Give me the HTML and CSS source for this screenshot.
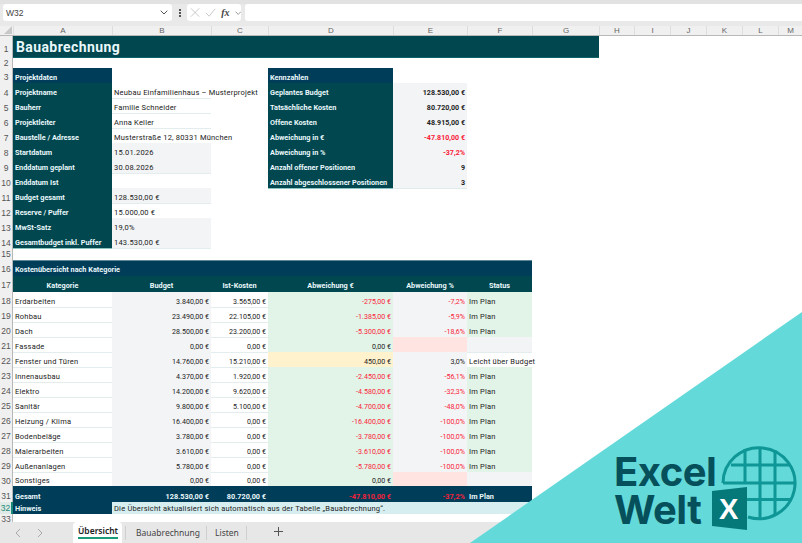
FILE: index.html
```html
<!DOCTYPE html>
<html lang="de">
<head>
<meta charset="utf-8">
<title>Bauabrechnung</title>
<link rel="stylesheet" href="styles.css">
</head>
<body>
<div class="app">
  <div class="strip"></div>
  <div class="fbar">
    <div class="namebox"><span>W32</span>
      <svg class="chev" width="8" height="5" viewBox="0 0 8 5"><path d="M.7.7 4 4l3.3-3.3" fill="none" stroke="#555" stroke-width="1"/></svg>
    </div>
    <div class="dots"><i></i><i></i><i></i></div>
    <div class="fxbox">
      <svg width="11" height="11" viewBox="0 0 11 11"><path d="M1 1l9 9M10 1l-9 9" stroke="#c4c4c4" stroke-width="1"/></svg>
      <svg width="12" height="11" viewBox="0 0 12 11"><path d="M1 6l3.500 3.500L11 1.500" fill="none" stroke="#c4c4c4" stroke-width="1"/></svg>
      <span class="fx">fx</span>
      <svg width="7" height="4" viewBox="0 0 7 4"><path d="M.5.5 3.500 3.500 6.500.5" fill="none" stroke="#777" stroke-width=".8"/></svg>
    </div>
    <div class="formula"></div>
  </div>
  <div class="sheet">
    <div class="row colhead">
      <div class="corner"><svg width="8" height="8" viewBox="0 0 8 8"><path d="M8 0v8H0z" fill="#c8c8c8"/></svg></div>
      <div>A</div><div>B</div><div>C</div><div>D</div><div>E</div><div>F</div><div>G</div><div>H</div><div>I</div><div>J</div><div>K</div><div>L</div><div>M</div>
    </div>

    <div class="row r1"><div class="hd">1</div><div class="title">Bauabrechnung</div></div>
    <div class="row r2"><div class="hd">2</div></div>
    <div class="row"><div class="hd">3</div><div class="sec">Projektdaten</div><div></div><div></div><div class="sec">Kennzahlen</div></div>

    <div class="row kp"><div class="hd">4</div><div class="lb">Projektname</div><div class="tx ln">Neubau Einfamilienhaus – Musterprojekt</div><div></div><div class="lb">Geplantes Budget</div><div class="kv">128.530,00 €</div></div>
    <div class="row kp"><div class="hd">5</div><div class="lb">Bauherr</div><div class="tx ln">Familie Schneider</div><div></div><div class="lb">Tatsächliche Kosten</div><div class="kv">80.720,00 €</div></div>
    <div class="row kp"><div class="hd">6</div><div class="lb">Projektleiter</div><div class="tx ln">Anna Keller</div><div></div><div class="lb">Offene Kosten</div><div class="kv">48.915,00 €</div></div>
    <div class="row kp"><div class="hd">7</div><div class="lb">Baustelle / Adresse</div><div class="tx ln">Musterstraße 12, 80331 München</div><div></div><div class="lb">Abweichung in €</div><div class="kv neg">-47.810,00 €</div></div>
    <div class="row kp"><div class="hd">8</div><div class="lb">Startdatum</div><div class="tx gray">15.01.2026</div><div></div><div class="lb">Abweichung in %</div><div class="kv neg">-37,2%</div></div>
    <div class="row kp"><div class="hd">9</div><div class="lb">Enddatum geplant</div><div class="tx gray">30.08.2026</div><div></div><div class="lb">Anzahl offener Positionen</div><div class="kv">9</div></div>
    <div class="row kp"><div class="hd">10</div><div class="lb">Enddatum Ist</div><div class="tx ln"></div><div></div><div class="lb">Anzahl abgeschlossener Positionen</div><div class="kv">3</div></div>
    <div class="row kp"><div class="hd">11</div><div class="lb">Budget gesamt</div><div class="tx gray">128.530,00 €</div></div>
    <div class="row kp"><div class="hd">12</div><div class="lb">Reserve / Puffer</div><div class="tx ln">15.000,00 €</div></div>
    <div class="row kp"><div class="hd">13</div><div class="lb">MwSt-Satz</div><div class="tx gray">19,0%</div></div>
    <div class="row kp"><div class="hd">14</div><div class="lb">Gesamtbudget inkl. Puffer</div><div class="tx gray">143.530,00 €</div></div>
    <div class="row r15"><div class="hd">15</div></div>

    <div class="row r16"><div class="hd">16</div><div class="sec wide">Kostenübersicht nach Kategorie</div></div>
    <div class="row r17"><div class="hd">17</div><div class="th">Kategorie</div><div class="th">Budget</div><div class="th">Ist-Kosten</div><div class="th">Abweichung €</div><div class="th">Abweichung %</div><div class="th">Status</div></div>

    <div class="row"><div class="hd">18</div><div class="tx ln">Erdarbeiten</div><div class="num gray">3.840,00 €</div><div class="num ln">3.565,00 €</div><div class="num green red">-275,00 €</div><div class="num gray red">-7,2%</div><div class="tx green">Im Plan</div></div>
    <div class="row"><div class="hd">19</div><div class="tx ln">Rohbau</div><div class="num gray">23.490,00 €</div><div class="num ln">22.105,00 €</div><div class="num green red">-1.385,00 €</div><div class="num gray red">-5,9%</div><div class="tx green">Im Plan</div></div>
    <div class="row"><div class="hd">20</div><div class="tx ln">Dach</div><div class="num gray">28.500,00 €</div><div class="num ln">23.200,00 €</div><div class="num green red">-5.300,00 €</div><div class="num gray red">-18,6%</div><div class="tx green">Im Plan</div></div>
    <div class="row"><div class="hd">21</div><div class="tx ln">Fassade</div><div class="num gray">0,00 €</div><div class="num ln">0,00 €</div><div class="num green">0,00 €</div><div class="num pink"></div><div class="tx gray"></div></div>
    <div class="row"><div class="hd">22</div><div class="tx ln">Fenster und Türen</div><div class="num gray">14.760,00 €</div><div class="num ln">15.210,00 €</div><div class="num yellow">450,00 €</div><div class="num gray">3,0%</div><div class="tx ln">Leicht über Budget</div></div>
    <div class="row"><div class="hd">23</div><div class="tx ln">Innenausbau</div><div class="num gray">4.370,00 €</div><div class="num ln">1.920,00 €</div><div class="num green red">-2.450,00 €</div><div class="num gray red">-56,1%</div><div class="tx green">Im Plan</div></div>
    <div class="row"><div class="hd">24</div><div class="tx ln">Elektro</div><div class="num gray">14.200,00 €</div><div class="num ln">9.620,00 €</div><div class="num green red">-4.580,00 €</div><div class="num gray red">-32,3%</div><div class="tx green">Im Plan</div></div>
    <div class="row"><div class="hd">25</div><div class="tx ln">Sanitär</div><div class="num gray">9.800,00 €</div><div class="num ln">5.100,00 €</div><div class="num green red">-4.700,00 €</div><div class="num gray red">-48,0%</div><div class="tx green">Im Plan</div></div>
    <div class="row"><div class="hd">26</div><div class="tx ln">Heizung / Klima</div><div class="num gray">16.400,00 €</div><div class="num ln">0,00 €</div><div class="num green red">-16.400,00 €</div><div class="num gray red">-100,0%</div><div class="tx green">Im Plan</div></div>
    <div class="row"><div class="hd">27</div><div class="tx ln">Bodenbeläge</div><div class="num gray">3.780,00 €</div><div class="num ln">0,00 €</div><div class="num green red">-3.780,00 €</div><div class="num gray red">-100,0%</div><div class="tx green">Im Plan</div></div>
    <div class="row"><div class="hd">28</div><div class="tx ln">Malerarbeiten</div><div class="num gray">3.610,00 €</div><div class="num ln">0,00 €</div><div class="num green red">-3.610,00 €</div><div class="num gray red">-100,0%</div><div class="tx green">Im Plan</div></div>
    <div class="row"><div class="hd">29</div><div class="tx ln">Außenanlagen</div><div class="num gray">5.780,00 €</div><div class="num ln">0,00 €</div><div class="num green red">-5.780,00 €</div><div class="num gray red">-100,0%</div><div class="tx green">Im Plan</div></div>
    <div class="row r30"><div class="hd">30</div><div class="tx">Sonstiges</div><div class="num gray">0,00 €</div><div class="num">0,00 €</div><div class="num green">0,00 €</div><div class="num pink"></div><div class="tx gray"></div></div>
    <div class="row r31"><div class="hd">31</div><div class="tot">Gesamt</div><div class="tot right">128.530,00 €</div><div class="tot right">80.720,00 €</div><div class="tot right minus">-47.810,00 €</div><div class="tot right minus">-37,2%</div><div class="tot">Im Plan</div></div>
    <div class="row r32"><div class="hd active">32</div><div class="tot">Hinweis</div><div class="note">Die Übersicht aktualisiert sich automatisch aus der Tabelle „Bauabrechnung“.</div></div>
    <div class="row r33"><div class="hd">33</div></div>
  </div>
  <div class="tabs">
    <div class="navs">
      <svg width="6" height="10" viewBox="0 0 6 10"><path d="M5 1 1 5l4 4" fill="none" stroke="#a8a8a8"/></svg>
      <svg width="6" height="10" viewBox="0 0 6 10"><path d="m1 1 4 4-4 4" fill="none" stroke="#a8a8a8"/></svg>
    </div>
    <div class="tab on"><span>Übersicht</span></div>
    <div class="tab sheet-b">Bauabrechnung</div>
    <div class="tab sheet-l">Listen</div>
    <div class="plus"><svg width="9" height="9" viewBox="0 0 9 9"><path d="M4.500 0v9M0 4.500h9" stroke="#555"/></svg></div>
  </div>
</div>

<svg class="wedge" width="802" height="543" viewBox="0 0 802 543">
  <polygon points="802,312 802,543 470,543" fill="#64d9d9"/>
  <g fill="none" stroke="#0f9696" stroke-width="3">
    <path d="M723 483A36 35.500 0 1 1 748 517"/>
    <path d="M723 483H795M731 465H789M747 499.500H792M745 449V483M760 447V518M775 450V514"/>
  </g>
  <polygon points="712,491 747,487 747,530 712,526" fill="#05787a"/>
</svg>
<div class="brand"><div>Excel</div><div>Welt</div></div>
<div class="brandx">X</div>
</body>
</html>
```
FILE: styles.css
```css
* { box-sizing: border-box; }
html, body { margin: 0; padding: 0; }
body {
  width: 802px;
  height: 543px;
  overflow: hidden;
  background: #fff;
  font-family: "Roboto", sans-serif;
  font-size: 7.500px;
  color: #222;
  position: relative;
}
.app { display: flex; flex-direction: column; height: 543px; }

.strip { height: 4px; background: #e2e2e2; }
.fbar { height: 22px; background: #e9e9e9; display: flex; gap: 4px; padding: 0 0 5px 3px; align-items: stretch; }
.namebox, .fxbox, .formula { background: #fff; border-radius: 3px; }
.namebox { width: 169px; display: flex; justify-content: space-between; align-items: center; padding: 0 4px 0 3px; font-family: "Liberation Sans", sans-serif; font-size: 8.500px; color: #444; }
.dots { width: 7px; display: flex; flex-direction: column; align-items: center; justify-content: center; gap: 1px; }
.dots i { width: 2px; height: 2px; background: #555; }
.fxbox { width: 54px; display: flex; align-items: center; gap: 5px; padding-left: 3px; }
.fx { font-family: "Liberation Serif", serif; font-style: italic; font-weight: bold; font-size: 10px; color: #444; }
.formula { flex: 1; border-radius: 3px 0 0 3px; }

.row {
  display: grid;
  grid-template-columns: 13px 99px 99px 57px 125px 74px 65px 67px 35px 36px 36px 36px 36px 24px;
  height: 15px;
}
.row > div { white-space: nowrap; min-width: 0; padding-top: 4px; line-height: 11px; }
.kp > div { padding-top: 5px; line-height: 10px; }

.colhead { height: 10px; background: #f0f0f0; border-bottom: 1px solid #b8b8b8; }
.colhead > div { padding-top: 0; line-height: 9px; text-align: center; color: #666; font-family: "Liberation Sans", sans-serif; font-size: 8px; border-left: 1px solid #dedede; }
.colhead > .corner { border: 0; display: flex; justify-content: flex-end; align-items: flex-end; padding: 0 1px 1px 0; }

.row > .hd {
  background: #f0f0f0;
  border-right: 1px solid #b8b8b8;
  color: #555;
  text-align: center;
  font-family: "Liberation Sans", sans-serif;
  font-size: 8.500px;
}
.row > .hd.active { color: #1b8a78; background: #dfe9e6; border-right: 2px solid #1b8a78; }

.r1 { height: 21px; }
.r1 > .hd { padding-top: 8px; }
.row > .title {
  grid-column: 2 / 9;
  background: #00474f;
  color: #eaf8fb;
  font-size: 14px;
  font-weight: 700;
  letter-spacing: 0.4px;
  line-height: 19px;
  padding: 2px 0 0 3px;
  border-bottom: 1px solid #0c6468;
}
.r2 { height: 11px; }
.r2 > div { padding-top: 1px; line-height: 10px; }
.r15 { height: 12px; }
.r15 > div { padding-top: 1px; line-height: 11px; }
.r16 { height: 16px; }
.r16 > .sec { padding-top: 3px; }
.r17 { height: 16px; }
.r30 { height: 14px; }
.r30 > div { line-height: 10px; }
.r31 { height: 16px; }
.r31 > div { padding-top: 5px; }
.r32 { height: 12px; }
.r32 > div { padding-top: 1px; }
.r33 { height: 8px; }
.r33 > .hd { line-height: 8px; padding-top: 1px; overflow: hidden; }

.sec, .lb, .th, .tot { color: #eaf8fb; font-weight: 700; font-size: 7.300px; }
.sec { background: #003d58; padding-left: 2px; }
.row > .sec.wide { grid-column: 2 / 8; border-top: 1px solid #5e8696; }
.lb { background: #00474f; padding-left: 2px; border-bottom: 1px solid #8cc4c4; }
.th { background: #00474f; text-align: center; }
.tot { background: #003d58; padding-left: 2px; }
.right { text-align: right; padding-right: 2px; }
.row > .minus { color: #f5203a; }

.tx { padding-left: 2px; letter-spacing: 0.2px; }
.num { text-align: right; padding-right: 2px; font-size: 7.100px; }
.ln { border-bottom: 1px solid #e3edee; }
.gray { background: #f2f4f6; border-bottom: 1px solid #e3edee; }
.green { background: #e2f3e8; border-bottom: 1px solid #d5e8e3; }
.yellow { background: #fff2cc; border-bottom: 1px solid #e3edee; }
.pink { background: #ffe4e1; border-bottom: 1px solid #e3edee; }
.red { color: #fa2438; }
.kv { background: #f2f4f6; border-bottom: 1px solid #e0ebec; text-align: right; padding-right: 2px; font-weight: 700; font-size: 7.100px; }
.kv.neg { color: #fa2038; }

.note {
  grid-column: 3 / 8;
  background: #d6eef0;
  padding-left: 2px;
  letter-spacing: 0.2px;
}

.tabs {
  flex: 1;
  background: #e7e7e7;
  display: flex;
  align-items: stretch;
  font-family: "Noto Sans", sans-serif;
  font-size: 8.500px;
  color: #444;
}
.navs { width: 73px; display: flex; gap: 16px; align-items: center; padding-left: 15px; }
.tab { display: flex; align-items: center; line-height: 11px; padding-bottom: 2px; }
.tab.on {
  width: 49px;
  background: #fff;
  border-radius: 4px 4px 0 0;
  color: #222;
  font-weight: 600;
  padding-left: 5px;
}
.tab.on span { border-bottom: 2px solid #1b9c78; padding-bottom: 1px; margin-top: 1px; }
.sheet-b { margin: 4px 0 3px 3px; padding-left: 10px; width: 82px; border-left: 1px solid #cfcfcf; border-right: 1px solid #cfcfcf; }
.sheet-l { margin: 4px 0 3px; padding-left: 8px; width: 40px; border-right: 1px solid #cfcfcf; }
.plus { display: flex; align-items: center; padding: 0 0 2px 27px; }

.wedge { position: absolute; left: 0; top: 0; pointer-events: none; }
.brand {
  position: absolute;
  left: 614px;
  top: 453px;
  color: #05505a;
  font-family: "Inter", "Liberation Sans", sans-serif;
  font-weight: 700;
  font-size: 40px;
  line-height: 38px;
  letter-spacing: -0.5px;
}
.brandx {
  position: absolute;
  left: 719px;
  top: 492px;
  color: #fff;
  font-family: "Liberation Sans", sans-serif;
  font-weight: 700;
  font-size: 29px;
  line-height: 34px;
}
```
